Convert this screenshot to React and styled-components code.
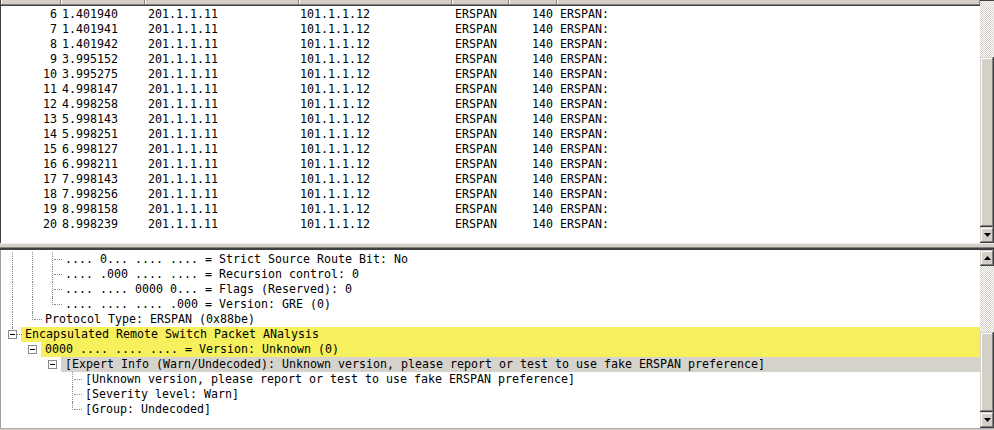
import React from "react";
import styled, { createGlobalStyle } from "styled-components";

const GlobalStyle = createGlobalStyle`
  html, body {
    margin: 0;
    padding: 0;
    background: #fff;
    overflow: hidden;
  }
`;

const packets = [
  [6, "1.401940"],
  [7, "1.401941"],
  [8, "1.401942"],
  [9, "3.995152"],
  [10, "3.995275"],
  [11, "4.998147"],
  [12, "4.998258"],
  [13, "5.998143"],
  [14, "5.998251"],
  [15, "6.998127"],
  [16, "6.998211"],
  [17, "7.998143"],
  [18, "7.998256"],
  [19, "8.998158"],
  [20, "8.998239"],
];

const headerWidths = [60, 84, 154, 153, 57, 48];

const F = { line: "full" };
const E = { line: "none" };

const tree = [
  { cells: [F, F, { line: "full", dash: true }], text: ".... 0... .... .... = Strict Source Route Bit: No" },
  { cells: [F, F, { line: "full", dash: true }], text: ".... .000 .... .... = Recursion control: 0" },
  { cells: [F, F, { line: "full", dash: true }], text: ".... .... 0000 0... = Flags (Reserved): 0" },
  { cells: [F, F, { line: "top", dash: true }], text: ".... .... .... .000 = Version: GRE (0)" },
  { cells: [F, { line: "top", dash: true }], text: "Protocol Type: ERSPAN (0x88be)" },
  { cells: [{ line: "top", dash: true, box: true }], text: "Encapsulated Remote Switch Packet ANalysis", hl: "warn" },
  { cells: [E, { line: "none", box: true }], text: "0000 .... .... .... = Version: Unknown (0)", hl: "warn" },
  {
    cells: [E, E, { line: "none", box: true }],
    text: "[Expert Info (Warn/Undecoded): Unknown version, please report or test to use fake ERSPAN preference]",
    hl: "sel",
  },
  { cells: [E, E, E, { line: "full", dash: true }], text: "[Unknown version, please report or test to use fake ERSPAN preference]" },
  { cells: [E, E, E, { line: "full", dash: true }], text: "[Severity level: Warn]" },
  { cells: [E, E, E, { line: "top", dash: true }], text: "[Group: Undecoded]" },
];

const raised = `
  background: #d4d0c8;
  box-shadow: inset -1px -1px #404040, inset 1px 1px #d4d0c8,
    inset -2px -2px #808080, inset 2px 2px #fff;
`;

const Window = styled.div`
  width: 994px;
  height: 430px;
  display: flex;
  flex-direction: column;
  background: #fff;
  font-family: "DejaVu Sans Mono", "Liberation Mono", monospace;
  font-size: 11.63px;
  color: #000;
`;

const Pane = styled.div`
  display: flex;
  height: ${(p) => p.$height}px;
  flex: none;
  overflow: hidden;
`;

const ListArea = styled.div`
  flex: 1;
  display: flex;
  flex-direction: column;
  border-left: 1px solid ${(p) => p.$edge};
  overflow: hidden;
`;

const HeaderBar = styled.div`
  display: flex;
  height: 4px;
  flex: none;
  background: #d4d0c8;
  border-bottom: 1px solid #808080;
  box-shadow: 0 1px 0 #404040;
  margin-bottom: 2px;
`;

const HeaderCell = styled.div`
  flex: ${(p) => (p.$w ? `0 0 ${p.$w}px` : "1")};
  box-shadow: inset -1px 0 #808080, inset 1px 0 #fff;
`;

const PacketRow = styled.div`
  display: grid;
  grid-template-columns: 56px 91px 152px 155px 60px 38px 1fr;
  height: 15px;
  line-height: 15px;
  white-space: pre;
`;

const Col = styled.span`
  text-align: ${(p) => (p.$right ? "right" : "left")};
  padding-left: ${(p) => p.$pad || 0}px;
  overflow: hidden;
`;

const Scrollbar = styled.div`
  flex: 0 0 14px;
  display: flex;
  flex-direction: column;
`;

const Track = styled.div`
  flex: 1;
  background: repeating-conic-gradient(#d4d0c8 0 25%, #fff 0 50%) 0 0 / 2px 2px;
`;

const Cap = styled.div`
  height: 1px;
  flex: none;
  background: #404040;
`;

const Thumb = styled.div`
  flex: 0 0 ${(p) => p.$h}px;
  ${raised}
`;

const ArrowButton = styled.div`
  flex: 0 0 16px;
  display: flex;
  align-items: center;
  justify-content: center;
  ${raised}
`;

const Splitter = styled.div`
  flex: 0 0 4px;
  background: #d4d0c8;
  border-top: 1px solid #ece9e4;
  border-bottom: 2px solid #404040;
  box-shadow: inset 0 -1px #808080;
`;

const TreeArea = styled.div`
  flex: 1;
  padding-top: 2px;
  border-left: 1px solid #a0a0a0;
  overflow: hidden;
`;

const TreeRow = styled.div`
  display: flex;
  height: 15px;
  line-height: 15px;
  padding-left: 1px;
`;

const Guide = styled.span`
  position: relative;
  flex: 0 0 20px;
  height: 15px;

  &::before {
    content: "";
    display: ${(p) => (p.$line === "none" ? "none" : "block")};
    position: absolute;
    left: 10px;
    top: 0;
    height: ${(p) => (p.$line === "top" ? 8 : 15)}px;
    border-left: 1px dotted #8a8a8a;
  }

  &::after {
    content: "";
    display: ${(p) => (p.$dash ? "block" : "none")};
    position: absolute;
    left: 12px;
    top: 7px;
    width: 8px;
    border-top: 1px dotted #8a8a8a;
  }
`;

const Expander = styled.span`
  position: absolute;
  left: 6px;
  top: 3px;
  width: 7px;
  height: 7px;
  border: 1px solid #8a8a8a;
  background: #fff;
  z-index: 1;

  &::after {
    content: "";
    position: absolute;
    left: 1px;
    top: 3px;
    width: 5px;
    height: 1px;
    background: #000;
  }
`;

const Label = styled.span`
  flex: 1;
  margin-left: -1px;
  padding-left: 4px;
  white-space: pre;
  background: ${(p) => (p.$hl === "warn" ? "#f5f05b" : p.$hl === "sel" ? "#d6d3cd" : "transparent")};
`;

const BottomEdge = styled.div`
  flex: 0 0 2px;
  background: #d4d0c8;
  border-top: 1px solid #a8a8a8;
  box-sizing: border-box;
`;

const Arrow = ({ up }) => (
  <svg width="7" height="4" viewBox="0 0 7 4">
    <polygon points={up ? "3.5,0 7,4 0,4" : "0,0 7,0 3.5,4"} fill="#000" />
  </svg>
);

const App = () => (
  <>
    <GlobalStyle />
    <Window>
      <Pane $height={243}>
        <ListArea $edge="#404040">
          <HeaderBar>
            {headerWidths.map((w, i) => (
              <HeaderCell key={i} $w={w} />
            ))}
            <HeaderCell />
          </HeaderBar>
          {packets.map(([no, time]) => (
            <PacketRow key={no}>
              <Col $right>{no}</Col>
              <Col $pad={5}>{time}</Col>
              <Col>201.1.1.11</Col>
              <Col>101.1.1.12</Col>
              <Col>ERSPAN</Col>
              <Col $right>140</Col>
              <Col $pad={7}>ERSPAN:</Col>
            </PacketRow>
          ))}
        </ListArea>
        <Scrollbar>
          <Cap />
          <Track />
          <Thumb $h={170} />
          <ArrowButton>
            <Arrow />
          </ArrowButton>
        </Scrollbar>
      </Pane>
      <Splitter />
      <Pane $height={178}>
        <TreeArea>
          {tree.map((row, i) => (
            <TreeRow key={i}>
              {row.cells.map((c, j) => (
                <Guide key={j} $line={c.line} $dash={c.dash}>
                  {c.box && <Expander />}
                </Guide>
              ))}
              <Label $hl={row.hl}>{row.text}</Label>
            </TreeRow>
          ))}
        </TreeArea>
        <Scrollbar>
          <ArrowButton>
            <Arrow up />
          </ArrowButton>
          <Track />
          <Thumb $h={80} />
          <ArrowButton>
            <Arrow />
          </ArrowButton>
        </Scrollbar>
      </Pane>
      <BottomEdge />
    </Window>
  </>
);

export default App;
